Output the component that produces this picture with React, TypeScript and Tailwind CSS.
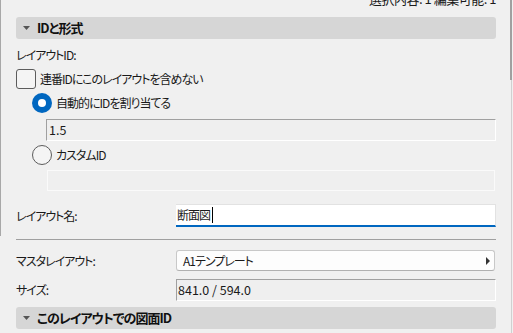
import React from 'react';

const font = "font-['Yu_Gothic_UI','Noto_Sans_CJK_JP',sans-serif] [font-feature-settings:'palt']";
const jp = 'text-[12px] tracking-[-1px] text-[#1a1a1a]';

const SectionHeader: React.FC<{ title: string }> = ({ title }) => (
  <div className="flex h-[22px] items-center rounded-[3px] bg-[#d6d6d6] pl-[7px]">
    <svg width="7" height="4" viewBox="0 0 7 4" className="mr-[7px]">
      <path d="M0 0 L7 0 L3.5 4 Z" fill="#555" />
    </svg>
    <span className="text-[13px] font-bold tracking-[-1px] text-[#111]">{title}</span>
  </div>
);

const Radio: React.FC<{ checked?: boolean; label: string }> = ({ checked, label }) => (
  <div className="ml-[16px] flex h-[20px] items-center">
    {checked ? (
      <div className="flex h-[20px] w-[20px] items-center justify-center rounded-full bg-[#0067c0]">
        <div className="h-[8px] w-[8px] rounded-full bg-white" />
      </div>
    ) : (
      <div className="h-[20px] w-[20px] rounded-full border border-[#5c5c5c] bg-[#f4f4f4]" />
    )}
    <span className={`ml-[4px] ${jp}`}>{label}</span>
  </div>
);

const FormRow: React.FC<{ label: string; children: React.ReactNode; className?: string }> = ({
  label,
  children,
  className,
}) => (
  <div className={`flex items-center ${className ?? ''}`}>
    <span className={`w-[160px] ${jp}`}>{label}</span>
    <div className="flex-1">{children}</div>
  </div>
);

export default function App() {
  return (
    <div className={`relative h-[333px] w-[513px] overflow-hidden bg-[#f0f0f0] ${font}`}>
      {/* window edges */}
      <div className="absolute left-0 top-0 h-[236px] w-[1px] bg-[#a8a8a8]" />
      <div className="absolute right-[1px] top-0 h-[80px] w-[2px] bg-[#a0a0a0]" />
      <div className="absolute right-[1px] top-[80px] h-[253px] w-[1px] bg-[#d0d0d0]" />

      <div className="flex h-[17px] justify-end pr-[17px]">
        <span className="-mt-[10px] text-[13px] leading-[18px] tracking-[-0.5px] text-[#1a1a1a]">
          選択内容: 1 編集可能: 1
        </span>
      </div>

      <div className="flex flex-col pl-[16px] pr-[17px]">
        <SectionHeader title="IDと形式" />

        <div className={`mt-[7px] flex h-[18px] items-center ${jp}`}>レイアウトID:</div>

        <div className="mt-[5px] flex h-[20px] items-center">
          <div className="h-[20px] w-[20px] rounded-[3px] border border-[#5c5c5c] bg-[#f4f4f4]" />
          <span className={`ml-[4px] ${jp}`}>連番IDにこのレイアウトを含めない</span>
        </div>

        <div className="mt-[4px]">
          <Radio checked label="自動的にIDを割り当てる" />
        </div>

        <div className="ml-[30px] mt-[6px] flex h-[22px] items-center border border-b-white border-l-[#a0a0a0] border-r-white border-t-[#a0a0a0] bg-[#efefef] pl-[2px] text-[12.5px] text-[#1a1a1a]">
          1.5
        </div>

        <div className="mt-[4px]">
          <Radio label="カスタムID" />
        </div>

        <div className="ml-[31px] mr-[1px] mt-[5px] h-[21px] border border-[#fafafa] bg-[#efefef]" />

        <FormRow label="レイアウト名:" className="mt-[13px]">
          <div className={`flex h-[23px] items-center border-r border-t border-[#e2e2e2] border-b-[2px] border-b-[#0067c0] bg-white pl-[1px] ${jp}`}>
            断面図
            <span className="ml-[2px] h-[16px] w-[1px] bg-black" />
          </div>
        </FormRow>

        <div className="mt-[12px] h-[1px] bg-[#a0a0a0]" />

        <FormRow label="マスタレイアウト:" className="mt-[10px]">
          <div className={`mr-[1px] flex h-[21px] items-center justify-between rounded-[3px] border border-[#c8c8c8] border-b-[#b0b0b0] bg-[#fdfdfd] pl-[6px] pr-[4px] ${jp}`}>
            <span>A1テンプレート</span>
            <svg width="4" height="8" viewBox="0 0 4 8">
              <path d="M0 0 L4 4 L0 8 Z" fill="#333" />
            </svg>
          </div>
        </FormRow>

        <FormRow label="サイズ:" className="mt-[8px]">
          <div className="flex h-[22px] items-center border border-b-white border-l-[#a0a0a0] border-r-white border-t-[#a0a0a0] bg-[#efefef] pl-[1px] text-[12.5px] text-[#1a1a1a]">
            841.0 / 594.0
          </div>
        </FormRow>

        <div className="mt-[6px]">
          <SectionHeader title="このレイアウトでの図面ID" />
        </div>
      </div>
    </div>
  );
}
